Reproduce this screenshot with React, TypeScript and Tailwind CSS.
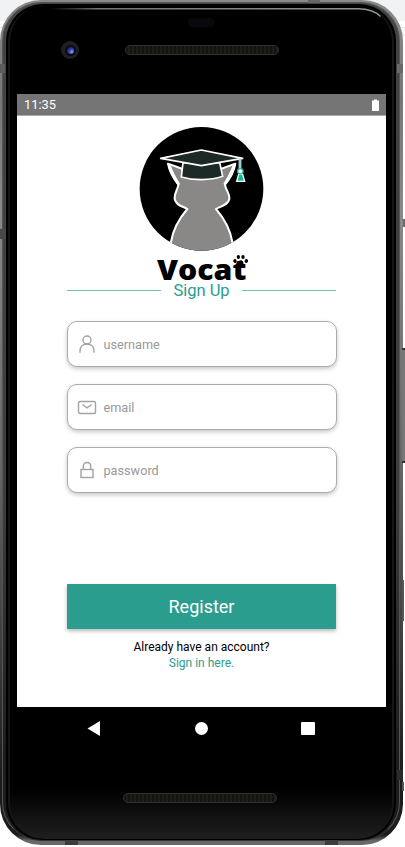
import React from "react";

function Logo() {
  return (
    <svg width="145" height="165" viewBox="0 0 435 495" className="ml-[2px] block shrink-0 overflow-visible" aria-label="Vocat">
      <defs>
        <clipPath id="disc">
          <circle cx="214.500" cy="206.500" r="185.500" />
        </clipPath>
      </defs>
      <circle cx="214.500" cy="206.500" r="185.500" fill="#000" />
      <g clipPath="url(#disc)">
        <path
          d="M114 131 L158 147 L272 147 L316 131 C312 155 299 178 285 194 C286 209 300 219 298 237 C294 256 274 258 258 267 C283 296 301 330 307 366 L313 420 L117 420 L123 366 C129 330 147 296 172 267 C156 258 138 256 134 237 C132 219 144 209 145 194 C131 176 118 155 114 131 Z"
          fill="#8a8887"
          stroke="#fff"
          strokeWidth="6"
          strokeLinejoin="round"
        />
        <path d="M112 129 C117 155 130 178 145 197 L150 191 C138 172 129 155 122 136 Z M318 129 C313 155 300 178 285 197 L280 191 C292 172 301 155 308 136 Z" fill="#fff" />
      </g>
      <path d="M159 128 L154 171 C190 182 241 182 278 169 L269 128 Z" fill="#1d2927" stroke="#fff" strokeWidth="5" />
      <path d="M92 115 L214 90 L338 115 L214 137 Z" fill="#1d2927" stroke="#fff" strokeWidth="5" strokeLinejoin="round" />
      <path d="M330 116 V149" stroke="#fff" strokeWidth="8" />
      <path d="M330 116 V149" stroke="#27a68f" strokeWidth="3" />
      <path d="M326 163 L320 184 H344 L338 163 Z" fill="#18b897" stroke="#fff" strokeWidth="4" />
      <circle cx="331" cy="154" r="8" fill="#fff" stroke="#27b699" strokeWidth="4" />
      <text
        x="81"
        y="479"
        textLength="268"
        lengthAdjust="spacingAndGlyphs"
        className="font-['Open_Sans',sans-serif] text-[84px] font-extrabold"
        fill="#000"
      >
        Vocat
      </text>
      <g fill="#000">
        <ellipse cx="315" cy="423" rx="5" ry="6" transform="rotate(-25 315 423)" />
        <ellipse cx="325" cy="411" rx="5" ry="6" />
        <ellipse cx="339" cy="411" rx="5" ry="6" />
        <ellipse cx="349" cy="423" rx="5" ry="6" transform="rotate(25 349 423)" />
        <path d="M332 421 C338 421 342 428 340 433 L323 433 C322 428 326 421 332 421Z" />
      </g>
    </svg>
  );
}

function UserIcon() {
  return (
    <svg width="20" height="20" viewBox="0 0 20 20" fill="none" stroke="#a3a3a3" strokeWidth="1.400">
      <circle cx="10" cy="6" r="4" />
      <path d="M3 18.800 V17 C3 12.500 6 10 10 10 C14 10 17 12.500 17 17 V18.800" />
    </svg>
  );
}

function MailIcon() {
  return (
    <svg width="20" height="20" viewBox="0 0 20 20" fill="none" stroke="#a3a3a3" strokeWidth="1.400">
      <rect x="1.500" y="4.500" width="17" height="12" rx="1.500" />
      <path d="M5.500 7.500 L10 10.900 L14.700 7.500" />
    </svg>
  );
}

function LockIcon() {
  return (
    <svg width="20" height="20" viewBox="0 0 20 20" fill="none" stroke="#a3a3a3" strokeWidth="1.400">
      <rect x="4" y="9.500" width="12" height="8" />
      <path d="M6.300 9.500 V6.300 C6.300 1.200 13.700 1.200 13.700 6.300 V9.500" />
    </svg>
  );
}

function Field({ icon, label }: { icon: React.ReactNode; label: string }) {
  return (
    <label className="flex h-[46px] w-[270px] items-center rounded-[10px] border border-[#ababab] bg-white pl-[9px] shadow-[0_2px_4px_rgba(0,0,0,0.22)]">
      {icon}
      <span className="ml-[7px] pt-[3px] text-[12.700px] leading-none text-[#999]">{label}</span>
    </label>
  );
}

function Speaker() {
  return (
    <div className="h-[10px] w-[154px] rounded-full border border-[#30302d] bg-[repeating-linear-gradient(90deg,#131311_0px,#131311_2px,#1e1d1a_2px,#1e1d1a_4px)]" />
  );
}

function Camera() {
  return (
    <div className="flex size-[18px] items-center justify-center rounded-full bg-[#201f1f]">
      <div className="flex size-[11px] items-center justify-center rounded-full bg-[#080b1c]">
        <div className="size-[7px] rounded-full bg-[radial-gradient(circle_at_70%_70%,#9cabff_0%,#4353bd_30%,#151e56_75%)]" />
      </div>
    </div>
  );
}

/* Side buttons, antenna bands and the glass reflection, laid over the phone's rim. */
function RimDetails() {
  return (
    <svg className="pointer-events-none absolute inset-0" width="405" height="847" viewBox="0 0 405 847" fill="none">
      <defs>
        <linearGradient id="glint" x1="50" x2="366" y1="0" y2="0" gradientUnits="userSpaceOnUse">
          <stop offset="0" stopColor="#6d7775" stopOpacity="0" />
          <stop offset="0.150" stopColor="#6d7775" />
          <stop offset="1" stopColor="#8c9694" />
        </linearGradient>
      </defs>
      <path d="M50 8.800 H358 Q373 9 380.500 16.500" stroke="url(#glint)" strokeWidth="1.400" />
      <rect x="0" y="64" width="5" height="9" fill="#5c5c5c" />
      <rect x="397" y="64" width="6" height="9" fill="#6a6a6a" />
      <rect x="0" y="229" width="6" height="10" fill="#484848" />
      <rect x="397" y="770" width="6" height="10" fill="#2b2b2b" />
      <rect x="308" y="0" width="12" height="3" fill="#666" />
      <rect x="65" y="840" width="13" height="5" fill="#3c3c3c" />
      <rect x="325" y="840" width="13" height="5" fill="#3c3c3c" />
      <rect x="403" y="219" width="2" height="8" fill="#6b6b6b" />
      <rect x="402" y="348" width="3" height="115" fill="#777" />
      <path d="M402 349 H405 M402 462 H405" stroke="#333" strokeWidth="2" />
      <rect x="402" y="580" width="2" height="41" fill="#555" />
      <rect x="402" y="782" width="2" height="9" fill="#555" />
    </svg>
  );
}

function StatusBar() {
  return (
    <header className="flex h-[22px] items-center justify-between border-b border-[#a9a9a9] bg-[#757575] px-[7px] text-[12.800px] text-white">
      <span className="pt-px">11:35</span>
      <svg width="7" height="12" viewBox="0 0 7 12" fill="#fff">
        <path d="M2 0.500 H5 V1.500 H7 V12 H0 V1.500 H2 Z" />
      </svg>
    </header>
  );
}

function SignUp() {
  return (
    <main className="flex h-[591px] flex-col items-center bg-white pt-1">
      <Logo />
      <div className="-mt-[6px] flex h-[22px] w-[269px] items-center justify-between">
        <div className="h-px w-[94px] bg-[#68c2b5]" />
        <h1 className="pt-[2px] text-[16.500px] leading-none text-[#2a9d8f]">Sign Up</h1>
        <div className="h-px w-[94px] bg-[#68c2b5]" />
      </div>
      <form className="mt-5 flex flex-col gap-[17px]">
        <Field icon={<UserIcon />} label="username" />
        <Field icon={<MailIcon />} label="email" />
        <Field icon={<LockIcon />} label="password" />
      </form>
      <div className="flex grow flex-col items-center justify-end pb-9">
        <button className="h-[45px] w-[269px] bg-[#2a9d8f] text-[18px] text-white shadow-[0_2px_4px_rgba(0,0,0,0.28)]">
          Register
        </button>
        <p className="mt-[10px] text-center text-[12px] leading-4 text-black">
          Already have an account?
          <br />
          <a className="text-[#2a9d8f]">Sign in here.</a>
        </p>
      </div>
    </main>
  );
}

function NavBar() {
  return (
    <nav className="flex h-[43px] items-center justify-between pl-[70px] pr-[71px]">
      <svg width="13" height="15" viewBox="0 0 13 15" fill="#fff">
        <path d="M13 0 V15 L0.500 7.500 Z" />
      </svg>
      <div className="ml-px size-[13px] rounded-full bg-white" />
      <div className="h-[13px] w-[14px] rounded-[1px] bg-white" />
    </nav>
  );
}

export default function App() {
  return (
    <div className="relative h-[847px] w-[405px] overflow-hidden bg-[linear-gradient(180deg,#f0f2f4_21px,#fff_21px,#fff_27px,#d5d8da_27px,#f7f8f8_28px,#f7f8f8_35px,#d5d8da_35px,#fff_36px)] font-[Roboto,sans-serif]">
      <div className="h-[845px] w-[403px] rounded-[41px] bg-[linear-gradient(180deg,#898b8b_0%,#777_12%,#8a8a8a_25%,#666_55%,#3a3a3a_78%,#1c1c1c_92%,#1c1c1c_98.800%,#696767_99.500%)] pb-1 pl-[2px] pr-[3px] pt-[2px]">
        <div className="h-full rounded-[39px] border border-[#555] border-b-[#333] bg-[linear-gradient(180deg,#444,#3d3d3d_60%,#1c1c1c_90%)] px-[3px] pt-px">
          <div className="h-full rounded-[37px] bg-black px-[2px] pb-px pt-[2px]">
            <div className="flex h-full flex-col rounded-[36px] border-x-2 border-[#161616] bg-[linear-gradient(180deg,#000_0%,#000_94%,#1f1f1f_100%)] pl-[7px] pr-[6px]">
              <div className="flex h-[88px] flex-col pt-3">
                <div className="ml-[171px] h-[9px] w-[27px] rounded-full bg-[#08090d]" />
                <div className="flex items-center gap-[46px] pl-11 pt-[14px]">
                  <Camera />
                  <Speaker />
                </div>
              </div>
              <StatusBar />
              <SignUp />
              <NavBar />
              <div className="flex pl-[106px] pt-[43px]">
                <Speaker />
              </div>
            </div>
          </div>
        </div>
      </div>
      <RimDetails />
    </div>
  );
}
